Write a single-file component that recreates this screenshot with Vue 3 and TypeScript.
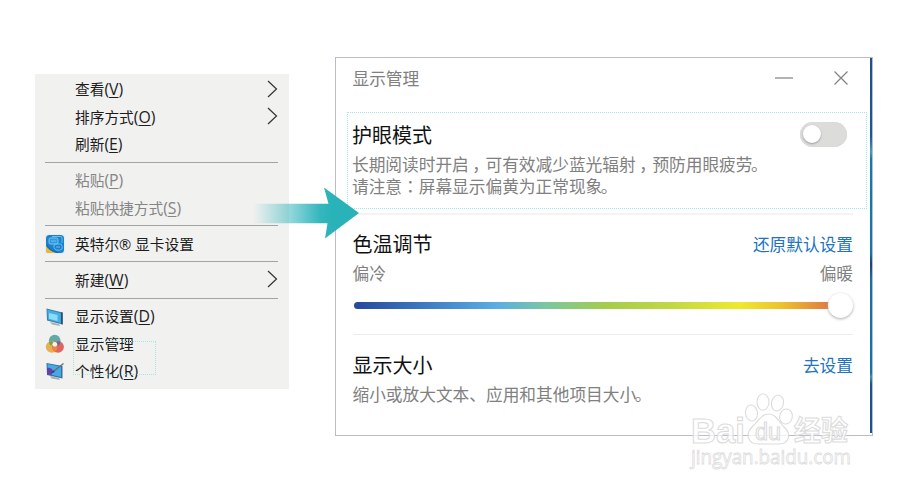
<script setup lang="ts">
interface MenuItem {
  label: string
  hotkey?: string
  icon?: 'intel' | 'monitor' | 'color' | 'brush'
  submenu?: boolean
  disabled?: boolean
}

const groups: MenuItem[][] = [
  [
    { label: '查看', hotkey: 'V', submenu: true },
    { label: '排序方式', hotkey: 'O', submenu: true },
    { label: '刷新', hotkey: 'E' },
  ],
  [
    { label: '粘贴', hotkey: 'P', disabled: true },
    { label: '粘贴快捷方式', hotkey: 'S', disabled: true },
  ],
  [{ label: '英特尔® 显卡设置', icon: 'intel' }],
  [{ label: '新建', hotkey: 'W', submenu: true }],
  [
    { label: '显示设置', hotkey: 'D', icon: 'monitor' },
    { label: '显示管理', icon: 'color' },
    { label: '个性化', hotkey: 'R', icon: 'brush' },
  ],
]
</script>

<template>
  <main class="stage">
    <nav class="menu">
      <div v-for="(group, g) in groups" :key="g" class="group">
        <div v-for="item in group" :key="item.label" class="item" :class="{ disabled: item.disabled }">
          <span class="icon">
            <svg v-if="item.icon === 'intel'" width="20" height="20" viewBox="0 0 20 20">
              <rect x="0.5" y="0.5" width="19" height="19" fill="#dceaf0" />
              <rect x="1" y="1" width="18" height="18" rx="3.5" fill="#1b80cd" />
              <path d="M1 12 Q4 17 11 19 H4 Q1 19 1 16Z" fill="#f2b631" />
              <path d="M2 11 Q5 17 13 18.5" fill="none" stroke="#1166a8" stroke-width="1" />
              <rect x="4" y="4" width="9" height="6" rx="1.5" fill="#2e9be0" stroke="#79c8f2" />
              <path d="M7 2.5 H16 Q17.5 3 17 5 V9 M6 7 H11 M11 10 H16 Q18 12 17 15 Q15 17 11 16 Q8 14 9 11Z M11 13 H15" fill="none" stroke="#6cbdec" stroke-width="1" />
            </svg>
            <svg v-else-if="item.icon === 'monitor'" width="20" height="20" viewBox="0 0 20 20">
              <path d="M5 15 L14 17 L15 19 L7 17.5Z" fill="#a9afb3" />
              <path d="M1.5 1.5 L17.5 5.5 V17.5 L2 13.5Z" fill="#3d7fa8" />
              <path d="M2.5 2.8 L15.8 6.2 V16 L3 12.5Z" fill="#45aeea" />
              <path d="M4 6 L12.500 8 V14 L4 11.800Z" fill="#8bdcf8" />
              <path d="M16 5.200 L17.700 5.600 V17.500 L16 17Z" fill="#28516d" />
            </svg>
            <svg v-else-if="item.icon === 'color'" width="20" height="20" viewBox="0 0 20 20">
              <circle cx="9.700" cy="6.600" r="5.800" fill="#61aaa6" />
              <circle cx="6.700" cy="12.800" r="5.900" fill="#e9ae54" />
              <circle cx="13" cy="12.800" r="5.900" fill="#dd6661" />
              <path d="M4 7.600 Q8 6 9.900 10 L6 11.500 Q4 10 4 7.600Z" fill="#6eaa40" />
              <path d="M15.400 7.600 Q11.500 6 9.700 10 L13.500 11.500 Q15.400 10 15.400 7.600Z" fill="#795fab" />
              <path d="M9.800 8.500 Q15.500 13.500 9.800 17.700 Q4.500 13.500 9.800 8.500Z" fill="#ee853b" />
              <circle cx="9.800" cy="10.300" r="2.400" fill="#fff4e7" />
            </svg>
            <svg v-else-if="item.icon === 'brush'" width="20" height="20" viewBox="0 0 20 20">
              <path d="M5 15 L14 17 L15 19 L6.500 17.500Z" fill="#a9afb3" />
              <path d="M1.500 2 L17.500 5 V17.500 L2 14Z" fill="#36709b" />
              <path d="M2.500 3 L16 5.800 V16 L3 13Z" fill="#45a8e8" />
              <path d="M2 7 Q6 6 8 10 L6.500 14 L2 13.500Z" fill="#6342a8" />
              <path d="M8.500 10.500 L18.500 2.500" stroke="#5e6b7a" stroke-width="1.300" />
              <path d="M6.500 12 Q7 9 9.500 9.500 Q10 12 6.500 12Z" fill="#333c64" />
            </svg>
          </span>
          <span class="label">{{ item.label }}<span v-if="item.hotkey" class="key">(<u>{{ item.hotkey }}</u>)</span></span>
          <svg v-if="item.submenu" class="chevron" width="12" height="18" viewBox="0 0 12 18">
            <path d="M2 1 L10.500 9 L2 17" fill="none" stroke="#333" stroke-width="1.200" />
          </svg>
        </div>
      </div>
      <div class="menu-outline"></div>
    </nav>

    <section class="panel">
      <header class="titlebar">
        <span class="title">显示管理</span>
        <svg class="win-min" width="18" height="14" viewBox="0 0 18 14"><path d="M0 7 H18" stroke="#8a8a8a" stroke-width="1.300" /></svg>
        <svg width="14" height="14" viewBox="0 0 14 14"><path d="M0.500 0.500 L13.500 13.500 M13.500 0.500 L0.500 13.500" stroke="#858585" stroke-width="1.300" /></svg>
      </header>

      <div class="eye">
        <div class="row">
          <h2>护眼模式</h2>
          <div class="switch"><i></i></div>
        </div>
        <p>长期阅读时开启<span class="mid">，</span>可有效减少蓝光辐射<span class="mid">，</span>预防用眼疲劳<span class="stop">。</span></p>
        <p class="second">请注意<span class="colon">：</span>屏幕显示偏黄为正常现象<span class="stop">。</span></p>
      </div>

      <div class="temp">
        <div class="row">
          <h2>色温调节</h2>
          <a>还原默认设置</a>
        </div>
        <div class="row ends"><span>偏冷</span><span>偏暖</span></div>
        <div class="slider"><div class="track"></div><div class="thumb"></div></div>
      </div>

      <div class="size">
        <div class="row">
          <h2>显示大小</h2>
          <a>去设置</a>
        </div>
        <p>缩小或放大文本、应用和其他项目大小<span class="stop">。</span></p>
      </div>
      <div class="edge"></div>
    </section>

    <svg class="arrow" width="110" height="56" viewBox="250 185 110 56">
      <defs>
        <linearGradient id="shaft" gradientUnits="userSpaceOnUse" x1="253" y1="0" x2="332" y2="0">
          <stop offset="0" stop-color="#29b3b9" stop-opacity="0" />
          <stop offset="0.500" stop-color="#29b3b9" stop-opacity="0.550" />
          <stop offset="0.850" stop-color="#29b3b9" stop-opacity="0.950" />
          <stop offset="1" stop-color="#29b3b9" />
        </linearGradient>
      </defs>
      <path d="M253 203.700 H328.500 L324 187.500 L359 213 L325 238.500 L327.500 223.300 H253Z" fill="url(#shaft)" />
    </svg>

    <svg class="watermark" width="180" height="90" viewBox="685 388 180 90">
      <g fill="#fff" fill-opacity="0.75" stroke="#dcdcdc" stroke-width="1.100">
        <text x="691" y="443" class="wm-latin" textLength="54" lengthAdjust="spacingAndGlyphs">Bai</text>
        <ellipse cx="751.500" cy="413" rx="6" ry="8" transform="rotate(-8 751.500 413)" />
        <ellipse cx="763" cy="402" rx="6" ry="8.200" />
        <ellipse cx="777.500" cy="403" rx="6" ry="8" transform="rotate(12 777.500 403)" />
        <ellipse cx="786" cy="416.500" rx="6.300" ry="7.600" transform="rotate(15 786 416.500)" />
        <path d="M769 414 C776 414 779 422 784 427 C792 434 789 444 779 444 H758 C748 444 745 434 752 427 C758 422 761 414 769 414Z" />
        <text x="755" y="440" class="wm-du" textLength="26" lengthAdjust="spacingAndGlyphs">du</text>
        <text x="794" y="441" class="wm-cjk" textLength="54" lengthAdjust="spacingAndGlyphs">经验</text>
        <text x="691" y="464" class="wm-url" textLength="160" lengthAdjust="spacingAndGlyphs">jingyan.baidu.com</text>
      </g>
    </svg>
  </main>
</template>

<style>
body {
  margin: 0;
  background: #fff;
}
</style>

<style scoped>
.stage {
  position: relative;
  box-sizing: border-box;
  width: 900px;
  height: 490px;
  padding: 57px 0 0 35px;
  display: flex;
  align-items: flex-start;
  gap: 46px;
  overflow: hidden;
  background: #fff;
  font-family: "Open Sans", "Noto Sans CJK SC", sans-serif;
}
.menu {
  position: relative;
  box-sizing: border-box;
  width: 254px;
  height: 315px;
  margin-top: 17px;
  padding: 2px 11px 0 10px;
  background: #f1f1f0;
  color: #1c1c1c;
}
.group + .group {
  border-top: 1px solid #a3a3a3;
  margin-top: 3.500px;
  padding-top: 4.300px;
}
.item {
  display: flex;
  align-items: center;
  height: 27.400px;
  font-size: 14.700px;
  line-height: 27px;
  white-space: nowrap;
}
.item.disabled {
  color: #858585;
}
.icon {
  width: 30px;
  height: 20px;
}
.icon svg {
  display: block;
}
.label {
  flex: 1;
}
.key {
  font-size: 15.800px;
  line-height: 1;
}
.label u {
  text-underline-offset: 1.500px;
  text-decoration-thickness: 1px;
}
.chevron {
  margin-top: -2px;
}
.menu-outline {
  position: absolute;
  left: 38px;
  top: 267px;
  width: 81px;
  height: 32px;
  border: 1px dotted #a4e6e8;
}
.panel {
  position: relative;
  box-sizing: border-box;
  width: 538px;
  height: 379px;
  border: 1px solid #b9bdcb;
  background: #fff;
  font-family: "Noto Sans CJK SC", sans-serif;
  color: #808080;
  font-size: 16.700px;
}
.titlebar {
  display: flex;
  align-items: center;
  height: 39px;
  padding: 0 24px 0 16.500px;
}
.title {
  flex: 1;
  line-height: 24px;
  padding-top: 1px;
}
.win-min {
  margin-right: 41px;
}
.row {
  display: flex;
  justify-content: space-between;
  align-items: center;
}
h2 {
  margin: 0;
  font-size: 20px;
  font-weight: 400;
  line-height: 28px;
  color: #111;
}
p {
  margin: 0;
  line-height: 21.500px;
  white-space: nowrap;
}
.mid {
  display: inline-block;
  transform: translateX(3.500px);
}
.colon {
  font-family: "Noto Sans CJK TC", sans-serif;
}
.stop {
  display: inline-block;
  transform: translateX(-1.500px);
}
a {
  color: #2173c1;
}
.eye {
  box-sizing: border-box;
  width: 520px;
  height: 97px;
  margin: 15px 0 0 11px;
  padding: 8px 19px 0 4px;
  border: 1px dotted #a5e4e5;
}
.eye .row {
  height: 28px;
}
.eye p {
  margin-top: 5px;
}
.eye p.second {
  margin-top: 0;
}
.switch {
  box-sizing: border-box;
  width: 47px;
  height: 25px;
  margin-top: -1px;
  padding: 3px;
  border-radius: 13px;
  background: #dcdcdb;
  box-shadow: inset 0 0 1px #ccc;
}
.switch i {
  display: block;
  width: 18px;
  height: 18px;
  border-radius: 50%;
  background: #fff;
  box-shadow: 0 1px 2px #999;
}
.temp,
.size {
  box-sizing: border-box;
  width: 500.500px;
  margin-left: 16.500px;
  border-top: 1px solid #ececec;
}
.temp {
  height: 121px;
  margin-top: 4px;
  padding-top: 15px;
  border-top: 2px solid #f3f3f3;
}
.ends {
  height: 24px;
  margin-top: 3px;
}
.slider {
  display: flex;
  align-items: center;
  height: 26px;
  margin-top: 7px;
}
.track {
  flex: 1;
  height: 7px;
  margin-left: 1px;
  margin-right: -2px;
  border-radius: 4px 0 0 4px;
  background: linear-gradient(90deg, #284b9f 1%, #3e7bc0 15%, #5cade3 30%, #79c6a4 40%, #a4cd4b 53%, #c2d844 67%, #eee92e 81%, #ecc12d 90%, #df7945 100%);
}
.thumb {
  width: 25px;
  height: 25px;
  border-radius: 50%;
  background: #fff;
  box-shadow: 0 1px 3px #aaa;
}
.size {
  padding-top: 16px;
}
.size p {
  margin-top: 5px;
}
.edge {
  position: absolute;
  right: 0;
  top: 0;
  width: 2px;
  height: 375px;
  background: linear-gradient(#225083 0, #175b94 21%, #4d9abd 25%, #137aa9 27%, #1478a5 52%, #243f70 55%, #1a70a2 59%, #1276a3 84%, #3e96aa 85%, #1c5489 87%, #1c5489 100%);
}
.arrow {
  position: absolute;
  left: 250px;
  top: 185px;
}
.watermark {
  position: absolute;
  left: 685px;
  top: 388px;
}
.wm-latin {
  font: 700 35px "Liberation Sans", sans-serif;
}
.wm-du {
  font: 400 23px "Liberation Sans", sans-serif;
}
.wm-cjk {
  font: 700 28px "Noto Sans CJK SC", sans-serif;
}
.wm-url {
  font: 400 20px "Open Sans", sans-serif;
  stroke-width: 0.800px;
}
</style>
